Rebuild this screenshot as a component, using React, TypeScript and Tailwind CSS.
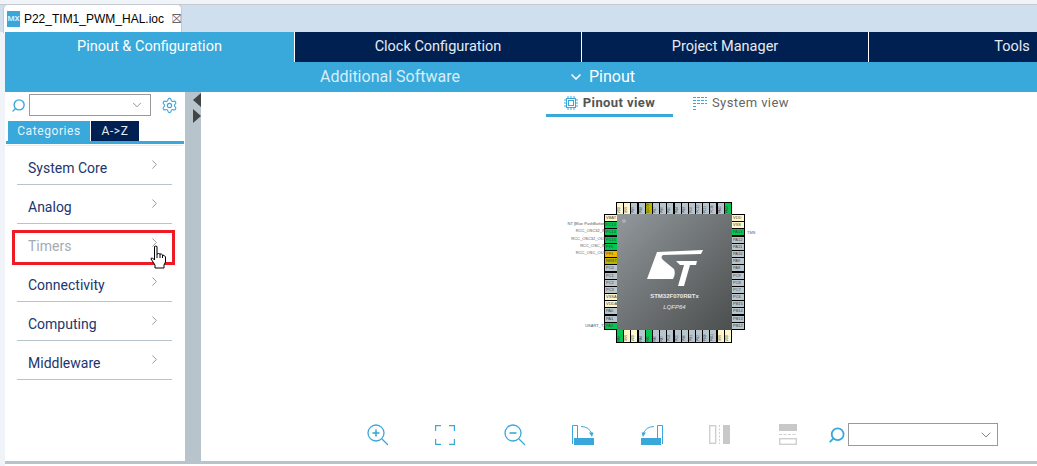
import React from "react";
import { ChevronDown, ChevronRight, Search, Settings } from "lucide-react";

const categories = ["System Core", "Analog", "Timers", "Connectivity", "Computing", "Middleware"];

const gray = "bg-[#b9c5cc]";
const cream = "bg-[#fff6cc]";
const green = "bg-[#00c850]";
const olive = "bg-[#b8b800]";
const orange = "bg-[#f2b800]";

const topPins = [
	["VDD", cream], ["VSS", cream], ["PB9", gray], ["PB8", gray], ["BOOT0", olive], ["PB7", gray], ["PB6", gray], ["PB5", gray],
	["PB4", gray], ["PB3", gray], ["PD2", gray], ["PC12", gray], ["PC11", gray], ["PC10", gray], ["PA15", gray], ["PA14", green],
];
const leftPins = [
	["VBAT", cream], ["PC13", green], ["PC14", green], ["PC15", green], ["PF0", green], ["PF1", orange], ["NRST", olive], ["PC0", gray],
	["PC1", gray], ["PC2", gray], ["PC3", gray], ["VSSA", cream], ["VDDA", cream], ["PA0", gray], ["PA1", gray], ["PA2", green],
];
const rightPins = [
	["VDD", cream], ["VSS", cream], ["PA13", green], ["PA12", gray], ["PA11", gray], ["PA10", gray], ["PA9", gray], ["PA8", gray],
	["PC9", gray], ["PC8", gray], ["PC7", gray], ["PC6", gray], ["PB15", gray], ["PB14", gray], ["PB13", gray], ["PB12", gray],
];
const bottomPins = [
	["PA3", green], ["VSS", cream], ["VDD", cream], ["PA4", gray], ["PA5", green], ["PA6", gray], ["PA7", gray], ["PC4", gray],
	["PC5", gray], ["PB0", gray], ["PB1", gray], ["PB2", gray], ["PB10", gray], ["PB11", gray], ["VSS", cream], ["VDD", cream],
];

const leftLabels = [
	["", 0], ["NT [Blue PushButton]", 1], ["RCC_OSC32_IN", 2], ["RCC_OSC32_OUT", 3], ["RCC_OSC_IN", 4], ["RCC_OSC_OUT", 5],
];

const SideItem = ({ name }: { name: string }) => {
	const isActive = name === "Timers";
	return (
		<div className="flex h-[39px] items-end">
			<div className="flex h-[26px] w-[155px] items-start justify-between border-b border-[#b8c4cb] pl-[11px] pr-[13px]">
				<span className={`text-[14px] leading-[18px] ${isActive ? "text-[#a3abb3]" : "text-[#20366e]"}`}>{name}</span>
				<ChevronRight size={15} strokeWidth={1.2} className="-mt-[2px] -mr-[3px] text-[#777]" />
			</div>
		</div>
	);
};

const VertPin = ({ label, color }: { label: string; color: string }) => (
	<div className={`relative w-[6px] overflow-hidden ${color}`}>
		<span className="absolute bottom-[1px] left-[1px] text-[3px] leading-[3px] text-[#444] [writing-mode:vertical-rl] rotate-180">
			{label}
		</span>
	</div>
);

const HorizPin = ({ label, color }: { label: string; color: string }) => (
	<div className={`h-[6px] overflow-hidden pl-[1px] text-[4px] leading-[6px] text-[#444] ${color}`}>{label}</div>
);

const Chip = () => (
	<div className="relative h-[141px] w-[141px] font-['Liberation_Sans',sans-serif]">
		<div className="ml-[12px] flex h-[12px] w-[116px] justify-between bg-black px-[1px] pt-[1px]">
			{topPins.map(([l, c], i) => <VertPin key={i} label={l} color={c} />)}
		</div>
		<div className="flex h-[116px]">
			<div className="flex h-full w-[13px] flex-col justify-between bg-black py-[1px] pl-[1px]">
				{leftPins.map(([l, c], i) => <HorizPin key={i} label={l} color={c} />)}
			</div>
			<div className="relative flex h-full w-[115px] flex-col items-center bg-gradient-to-br from-[#92989c] to-[#4c4f4f] pt-[36px]">
				<div className="absolute left-[5px] top-[5px] h-[4px] w-[4px] rounded-full bg-[#a9b0b4]" />
				<svg width="56" height="36" viewBox="0 0 56 36" fill="#fff">
					<path d="M10 2 L56 0 L54 4 L16 5 Q13 7 16 10 L27 19 Q29 24 26 29 L0 29 Z" />
					<path d="M26 12 L36 11 L30 4 Z" fill="none" />
					<path d="M18 9 L34 9 L32 14 L24 14 Z" fill="none" />
					<path d="M29 11 L50 11 L49 15 L43 15 L37 36 L31 36 L37 15 L33 15 Z" />
				</svg>
				<span className="mt-[6px] text-[6px] font-bold leading-[8px] text-[#e8e8e8]">STM32F070RBTx</span>
				<span className="mt-[3px] text-[6px] italic leading-[8px] text-[#e8e8e8]">LQFP64</span>
			</div>
			<div className="flex h-full w-[13px] flex-col justify-between bg-black py-[1px] pr-[1px]">
				{rightPins.map(([l, c], i) => <HorizPin key={i} label={l} color={c} />)}
			</div>
		</div>
		<div className="ml-[12px] flex h-[13px] w-[116px] justify-between bg-black px-[1px] pb-[1px]">
			{bottomPins.map(([l, c], i) => <VertPin key={i} label={l} color={c} />)}
		</div>

		{/* signal names round the package */}
		{leftLabels.map(([text, i]) =>
			text ? (
				<span
					key={i as number}
					className="absolute right-[139px] whitespace-nowrap text-[4px] leading-[6px] text-[#555]"
					style={{ top: 12 + (i as number) * 7.2 }}
				>
					{text}
				</span>
			) : null,
		)}
		<span className="absolute right-[139px] top-[121px] whitespace-nowrap text-[4px] leading-[6px] text-[#555]">USART_TX</span>
		<span className="absolute left-[143px] top-[28px] text-[4px] leading-[6px] text-[#555]">TMS</span>
	</div>
);

const ZoomIcon = ({ minus }: { minus?: boolean }) => (
	<svg width="22" height="22" viewBox="0 0 22 22" fill="none" stroke="#3aa7db" strokeWidth="1.3">
		<circle cx="9" cy="9" r="8" />
		<path d="M15 15 L21 21" />
		<path d="M5.5 9 H12.5" strokeWidth="1.6" />
		{!minus && <path d="M9 5.5 V12.5" strokeWidth="1.6" />}
	</svg>
);

const FitIcon = () => (
	<svg width="20" height="20" viewBox="0 0 20 20" fill="none" stroke="#3aa7db" strokeWidth="1.2">
		<path d="M.6 6 V.6 H6 M14 .6 H19.4 V6 M19.4 14 V19.4 H14 M6 19.4 H.6 V14" />
	</svg>
);

const RotateRightIcon = () => (
	<svg width="22" height="20" viewBox="0 0 22 20" fill="none" stroke="#3aa7db" strokeWidth="1">
		<path d="M.5 19 V.5 H5.5 V13" />
		<path d="M9 1.5 Q17 1.5 20 9" />
		<path d="M17 7.5 L21.5 7.5 L20 12 Z" fill="#3aa7db" stroke="none" />
		<rect x="2" y="13" width="20" height="7" fill="#3aa7db" stroke="none" />
	</svg>
);

const RotateLeftIcon = () => (
	<svg width="22" height="20" viewBox="0 0 22 20" fill="none" stroke="#3aa7db" strokeWidth="1">
		<path d="M21.5 19 V.5 H16.5 V13" />
		<path d="M13 1.5 Q5 1.5 2 9" />
		<path d="M5 7.5 L.5 7.5 L2 12 Z" fill="#3aa7db" stroke="none" />
		<rect x="0" y="13" width="20" height="7" fill="#3aa7db" stroke="none" />
	</svg>
);

const SplitVertIcon = () => (
	<svg width="21" height="19" viewBox="0 0 21 19" fill="none" stroke="#cfcfcf" strokeWidth="1.4">
		<rect x=".7" y=".7" width="6" height="17.6" />
		<path d="M10.5 0 V19" strokeDasharray="2 1.5" strokeWidth="1" />
		<rect x="14" y="0" width="7" height="19" fill="#c8c8c8" stroke="none" />
	</svg>
);

const SplitHorizIcon = () => (
	<svg width="18" height="21" viewBox="0 0 18 21" fill="none" stroke="#cfcfcf" strokeWidth="1.4">
		<rect x="0" y="0" width="18" height="7" fill="#c8c8c8" stroke="none" />
		<path d="M0 10.5 H18" strokeDasharray="3 1.5" strokeWidth="1" />
		<rect x=".7" y="14.7" width="16.6" height="5.6" />
	</svg>
);

const CpuIcon = () => (
	<svg width="14" height="14" viewBox="0 0 14 14" fill="none" stroke="#3aa7db" strokeWidth="1">
		<rect x="2.5" y="2.5" width="9" height="9" />
		<rect x="4.5" y="4.5" width="5" height="5" />
		<path d="M4 0 V2 M7 0 V2 M10 0 V2 M4 12 V14 M7 12 V14 M10 12 V14 M0 4 H2 M0 7 H2 M0 10 H2 M12 4 H14 M12 7 H14 M12 10 H14" />
	</svg>
);

const SystemIcon = () => (
	<svg width="14" height="13" viewBox="0 0 14 13" fill="none" stroke="#3aa7db" strokeWidth="1" strokeDasharray="3 1">
		<path d="M0 .5 H14 M0 3.5 H14 M0 6.5 H14 M0 9.5 H4 M0 12.5 H4" />
	</svg>
);

const HandCursor = () => (
	<svg width="17" height="24" viewBox="0 0 17 24" fill="#fff" stroke="#000" strokeWidth="1">
		<path d="M4.5 1.5 Q6 .5 7 1.5 V9 Q8.5 8 10 9 Q11.5 8.500 12.500 10 Q14.500 10 15.500 12 V17 L14 20 V23 H5 V20 L1 14 Q1 12.500 2.500 13 L4.500 15 Z" />
		<path d="M7 9 V13 M10 9 V13 M12.500 10 V13" />
	</svg>
);

export default function App() {
	return (
		<div className="flex h-[466px] w-[1037px] flex-col overflow-hidden bg-[#f0f4f9] font-['Roboto',sans-serif]">
			{/* editor tab strip */}
			<div className="mt-[4px] flex h-[28px] border-t border-[#c4cad0] bg-[#d0dfee]">
				<div className="-mt-[1px] ml-[3px] flex h-[29px] w-[179px] items-center rounded-t-[5px] border border-b-0 border-[#c4cad0] bg-white pl-[3px]">
					<span className="flex h-[16px] w-[16px] items-center justify-center bg-[#3aa7db] text-[8px] font-bold text-[#d5eefa]">MX</span>
					<span className="ml-[4px] font-['Liberation_Sans',sans-serif] text-[12px] text-black">P22_TIM1_PWM_HAL.ioc</span>
					<span className="ml-[8px] text-[12px] leading-none text-[#666]">⛝</span>
				</div>
			</div>

			<div className="ml-[5px] flex min-h-0 flex-1 flex-col bg-white">
				{/* perspective tabs */}
				<div className="flex h-[30px] overflow-hidden bg-white text-[14.500px]">
					<div className="flex h-full w-[289px] shrink-0 items-center justify-center bg-[#39a8db] text-white">Pinout &amp; Configuration</div>
					<div className="ml-[1px] flex h-full w-[286px] shrink-0 items-center justify-center bg-[#002052] text-[#e6ebf2]">Clock Configuration</div>
					<div className="ml-[1px] flex h-full w-[286px] shrink-0 items-center justify-center bg-[#002052] text-[#e6ebf2]">Project Manager</div>
					<div className="ml-[1px] flex h-full w-[286px] shrink-0 items-center justify-center bg-[#002052] text-[#e6ebf2]">Tools</div>
				</div>
				<div className="flex h-[30px] shrink-0 items-center bg-[#39a8db] text-[16px] text-[#d8eef9]">
					<span className="ml-[315px]">Additional Software</span>
					<ChevronDown size={16} strokeWidth={2.5} className="ml-[108px] text-white" />
					<span className="ml-[5px] text-white">Pinout</span>
				</div>

				<div className="flex min-h-0 flex-1 border-b-[3px] border-[#b8c4cb]">
					{/* categories panel */}
					<div className="relative w-[180px] shrink-0 bg-white">
						<div className="flex h-[24px] items-center pt-[2px]">
							<Search size={15} strokeWidth={2.2} className="ml-[6px] -scale-x-100 text-[#3aa7db]" />
							<div className="ml-[3px] flex h-[22px] w-[122px] items-center justify-end border border-[#999] pr-[6px]">
								<ChevronDown size={14} strokeWidth={1.2} className="text-[#666]" />
							</div>
							<Settings size={17} strokeWidth={1.6} className="ml-[10px] text-[#3aa7db]" />
						</div>
						<div className="ml-[1px] mt-[5px] flex h-[23px] w-[178px] border-b-[3px] border-[#39a8db] pl-[2px] text-[12px] tracking-[0.6px]">
							<div className="flex w-[82px] items-center justify-center bg-[#39a8db] text-[#e6f4fb]">Categories</div>
							<div className="ml-[1px] flex w-[48px] items-center justify-center bg-[#002052] text-[#e6ebf2]">A-&gt;Z</div>
						</div>
						<div className="mt-[1px] ml-[1px] h-[1px] w-[177px] bg-[#e8ecef]" />
						<div className="pl-[12px] pt-[-1px]">
							{categories.map((name) => (
								<SideItem key={name} name={name} />
							))}
						</div>
						{/* red highlight over the Timers row */}
						<div className="absolute left-[7px] top-[138px] h-[35px] w-[163px] border-[3px] border-[#ed1c24]" />
						<div className="absolute left-[145px] top-[153px]">
							<HandCursor />
						</div>
					</div>

					{/* splitter */}
					<div className="relative w-[16px] shrink-0 bg-[#b8c4cb]">
						<div className="ml-[8px] mt-[1px] h-0 w-0 border-y-[7px] border-r-[8px] border-y-transparent border-r-[#444]" />
						<div className="ml-[8px] mt-[2px] h-0 w-0 border-y-[7px] border-l-[8px] border-y-transparent border-l-[#444]" />
					</div>

					{/* pinout canvas */}
					<div className="flex min-w-0 flex-1 flex-col">
						<div className="flex h-[25px] pl-[345px] text-[13px]">
							<div className="flex h-[25px] w-[127px] items-center justify-center gap-[5px] border-b-[3px] border-[#39a8db] font-bold tracking-[0.4px] text-[#555]">
								<CpuIcon />
								<span>Pinout view</span>
							</div>
							<div className="ml-[20px] flex h-[22px] items-center gap-[5px] tracking-[0.4px] text-[#666]">
								<SystemIcon />
								<span>System view</span>
							</div>
						</div>
						<div className="ml-[403px] mt-[85px] flex-1">
							<Chip />
						</div>
						<div className="flex h-[41px] items-start pl-[166px]">
							<div className="mt-[3px] flex w-[631px] items-center">
								<div className="w-[69px]"><ZoomIcon /></div>
								<div className="w-[69px]"><FitIcon /></div>
								<div className="w-[69px]"><ZoomIcon minus /></div>
								<div className="w-[69px]"><RotateRightIcon /></div>
								<div className="w-[69px]"><RotateLeftIcon /></div>
								<div className="w-[70px]"><SplitVertIcon /></div>
								<div className="w-[50px]"><SplitHorizIcon /></div>
								<Search size={18} strokeWidth={2.4} className="-scale-x-100 text-[#3aa7db]" />
								<div className="ml-[2px] flex h-[23px] w-[150px] shrink-0 items-center justify-end border border-[#999] pr-[3px]">
									<ChevronDown size={16} strokeWidth={1.2} className="text-[#666]" />
								</div>
							</div>
						</div>
					</div>
				</div>
				<div className="h-[2px] bg-white" />
			</div>
		</div>
	);
}
